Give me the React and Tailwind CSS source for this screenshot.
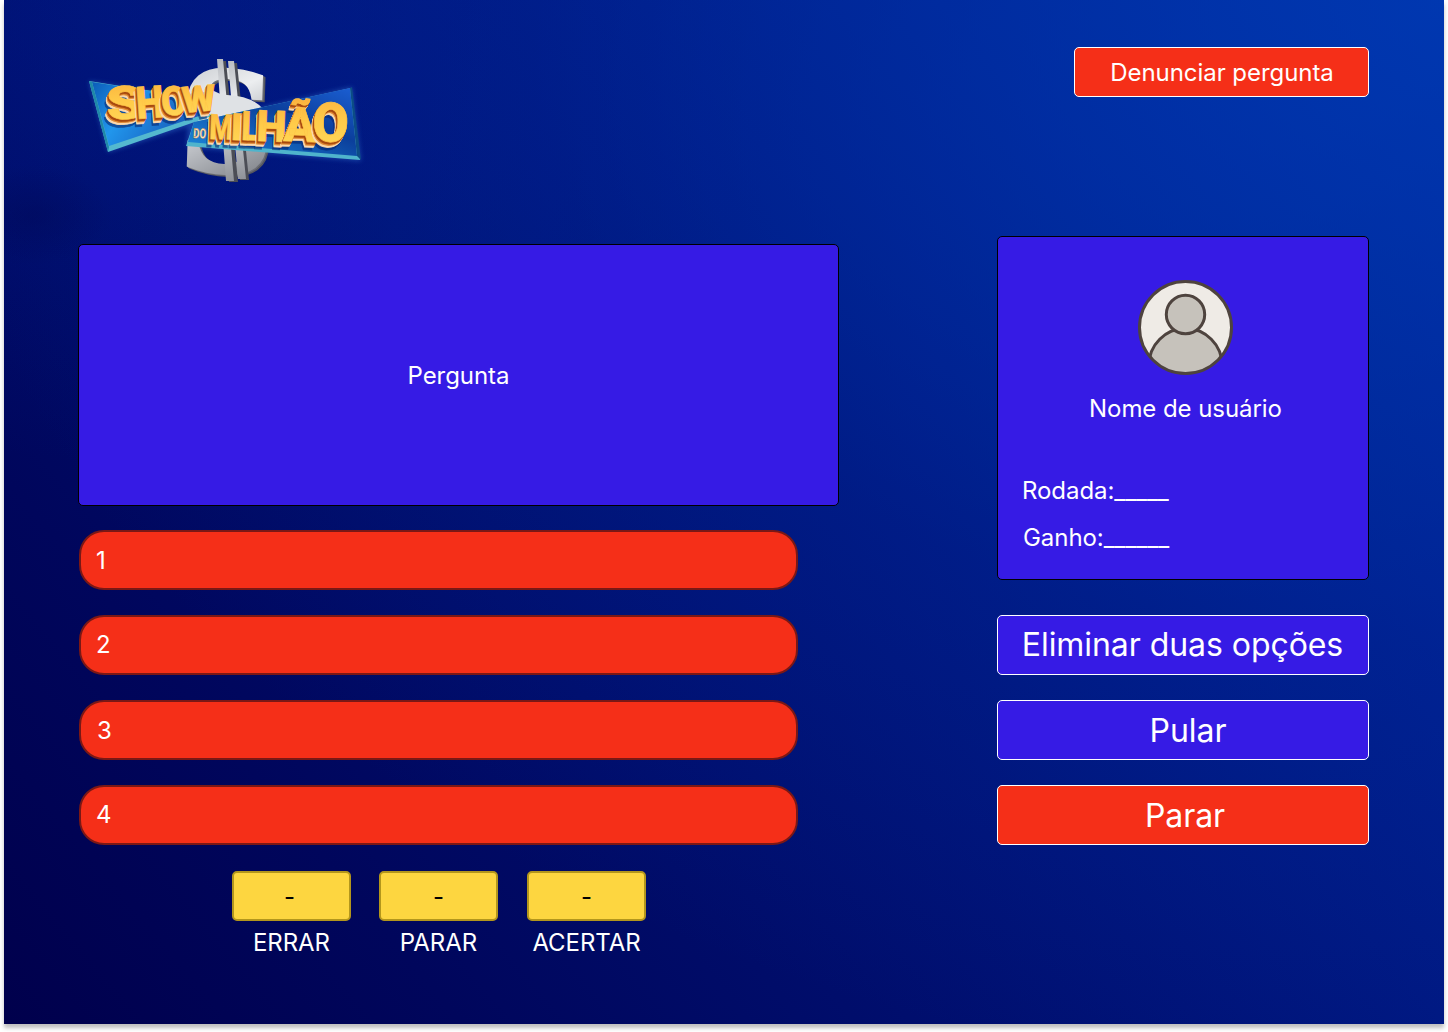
import React from "react";

const BACKDROP =
  "bg-[radial-gradient(ellipse_80px_50px_at_2%_21%,rgba(0,4,70,0.28)_0%,transparent_100%),radial-gradient(ellipse_at_100%_0%,rgba(0,62,185,0.7)_0%,rgba(0,50,170,0.22)_45%,transparent_75%),radial-gradient(ellipse_50%_45%_at_8%_0%,rgba(0,28,140,0.42)_0%,transparent_100%),linear-gradient(50deg,#00004c_0%,#00065c_20%,#001378_52%,#001f8e_78%,#00289c_100%)]";

const SHOW = [
  { ch: "S", x: 107, y: 120, w: 37, h: 33, r: -3 },
  { ch: "H", x: 137, y: 119, w: 28, h: 32, r: -4 },
  { ch: "O", x: 162, y: 116, w: 26, h: 29, r: -4 },
  { ch: "W", x: 183, y: 113, w: 34, h: 26, r: -5 },
];

const MILHAO = [
  { ch: "M", x: 209, y: 139, w: 24, h: 25, r: 2 },
  { ch: "I", x: 230, y: 140, w: 13, h: 27, r: 2 },
  { ch: "L", x: 241, y: 140, w: 18, h: 29, r: 2 },
  { ch: "H", x: 256, y: 141, w: 30, h: 31, r: 2 },
  { ch: "Ã", x: 283, y: 141, w: 33, h: 34, r: 2 },
  { ch: "O", x: 312, y: 141, w: 36, h: 39, r: 2 },
];

const EXTRUSION = [8, 7, 6, 5, 4, 3, 2, 1];

function Glyph({ g, dx = 0, dy = 0, fill, stroke }) {
  const size = 40;
  return (
    <text
      transform={`translate(${g.x + dx} ${g.y + dy}) rotate(${g.r}) scale(1 ${g.h / (size * 0.711)})`}
      textLength={g.w}
      lengthAdjust="spacingAndGlyphs"
      fontFamily="Roboto, sans-serif"
      fontWeight="900"
      fontSize={size}
      fill={fill}
      stroke={stroke || fill}
      strokeWidth="0.5"
    >
      {g.ch}
    </text>
  );
}

function GoldWord({ letters }) {
  return (
    <g>
      {letters.map((g) => (
        <g key={g.ch + g.x} opacity="0.6">
          <Glyph g={g} dx={-4} dy={8} fill="#06256f" />
        </g>
      ))}
      {letters.map((g) => (
        <g key={g.ch + g.x}>
          {EXTRUSION.map((d) => (
            <Glyph key={d} g={g} dx={d * -0.35} dy={d * 0.65} fill={d > 5 ? "#fbd9ae" : d > 3 ? "#e08a35" : "#a84a10"} />
          ))}
          <Glyph g={g} fill="url(#gold)" stroke="#ffc548" />
        </g>
      ))}
    </g>
  );
}

function Dollar({ dx = 0, dy = 0, fill }) {
  return (
    <g transform={`translate(${dx} ${dy})`} fill={fill} stroke={fill}>
      <text
        transform="translate(178 170) rotate(2)"
        fontFamily="'DejaVu Serif', serif"
        fontWeight="700"
        fontSize="138"
        textLength="94"
        lengthAdjust="spacingAndGlyphs"
        strokeWidth="3"
      >
        S
      </text>
    </g>
  );
}

function Logo() {
  return (
    <svg className="block h-[140px] w-[290px] overflow-visible" viewBox="80 50 290 140" aria-label="Show do Milhão">
      <defs>
        <linearGradient id="gold" x1="0" y1="0" x2="0" y2="1">
          <stop offset="0" stopColor="#fab03e" />
          <stop offset="0.45" stopColor="#ffca48" />
          <stop offset="1" stopColor="#ffdb5c" />
        </linearGradient>
        <linearGradient id="steel" gradientUnits="userSpaceOnUse" x1="0" y1="-105" x2="60" y2="10">
          <stop offset="0" stopColor="#c9ccd0" />
          <stop offset="0.35" stopColor="#eceef0" />
          <stop offset="0.6" stopColor="#c0c3c8" />
          <stop offset="1" stopColor="#85888e" />
        </linearGradient>
        <linearGradient id="bars" gradientUnits="userSpaceOnUse" x1="220" y1="60" x2="240" y2="182">
          <stop offset="0" stopColor="#b9bcc1" />
          <stop offset="0.35" stopColor="#eceef0" />
          <stop offset="1" stopColor="#8d9096" />
        </linearGradient>
        <linearGradient id="boardLeft" x1="0" y1="0" x2="1" y2="0.4">
          <stop offset="0" stopColor="#0b5cb8" />
          <stop offset="0.4" stopColor="#2196ec" />
          <stop offset="1" stopColor="#1556b5" />
        </linearGradient>
        <linearGradient id="boardRight" x1="0" y1="1" x2="1" y2="0">
          <stop offset="0" stopColor="#1c8fe0" />
          <stop offset="0.6" stopColor="#0b3f9c" />
          <stop offset="1" stopColor="#1b5fd4" />
        </linearGradient>
        <filter id="glow" x="-20%" y="-20%" width="140%" height="140%">
          <feGaussianBlur stdDeviation="2.5" />
        </filter>
      </defs>
      <path d="M89 81L217 103 202 122 108 152zM188 124L352 87 361 161 187 147z" fill="#2d69c9" opacity="0.55" filter="url(#glow)" />
      <Dollar dx={2.5} dy={2} fill="#55575f" />
      <Dollar dx={1.2} dy={1} fill="#6c6e75" />
      <Dollar fill="url(#steel)" />
      <path d="M220 61l6 0 12 121-9 0z M231 63l6 0 12 117-9 0z" fill="#4c4e56" />
      <path d="M217 59l6 0 11 122-8 0z M228 61l6 0 12 118-8 0z" fill="url(#bars)" />
      <path d="M206 82Q212 94 227 95Q252 96 263 109L240 122 204 120z" fill="#dfe2e5" />
      <path d="M89 81L190 97 212 116 108 152z" fill="#54b8cf" />
      <path d="M92 82L190 97 208 113 109 146z" fill="url(#boardLeft)" />
      <path d="M89 81L92 82 109 147 108 152z" fill="#1f88a8" />
      <path d="M194 122L351 88 360 160 186 146z" fill="#4fb4cc" />
      <path d="M194 122L350 88 357 156 188 142z" fill="url(#boardRight)" />
      <path d="M350 88L352 87 361 160 357 156z" fill="#0c4c86" />
      <GoldWord letters={SHOW} />
      <text
        transform="translate(193 138) rotate(3)"
        fontFamily="Roboto, sans-serif"
        fontWeight="900"
        fontSize="14"
        textLength="13"
        lengthAdjust="spacingAndGlyphs"
        fill="#fbe3b8"
        stroke="#8a4a1a"
        strokeWidth="0.3"
      >
        DO
      </text>
      <GoldWord letters={MILHAO} />
    </svg>
  );
}

function Avatar() {
  return (
    <svg className="block size-24" viewBox="0 0 96 96" aria-hidden="true">
      <defs>
        <clipPath id="face">
          <circle cx="48.5" cy="47.5" r="46" />
        </clipPath>
      </defs>
      <circle cx="48.5" cy="47.5" r="46" fill="#efebe6" />
      <g clipPath="url(#face)" fill="#c6c2bb" stroke="#4e433e" strokeWidth="3">
        <circle cx="48.5" cy="85" r="36.5" />
        <circle cx="48.5" cy="34.5" r="19.2" />
      </g>
      <circle cx="48.5" cy="47.5" r="46" fill="none" stroke="#4e433e" strokeWidth="3" />
    </svg>
  );
}

function SideButton({ color, shift, children }) {
  return (
    <button className={`flex h-[60px] w-full items-center justify-center rounded-[5px] border border-white text-[32px] ${color}`}>
      <span className={shift}>{children}</span>
    </button>
  );
}

function Score({ label, shift }) {
  return (
    <div className="flex w-[119px] flex-col items-center">
      <div className={`flex h-[50px] w-full items-center justify-center rounded-[5px] border-2 border-[#b3961c] bg-[#fdd640] text-black ${shift}`}>-</div>
      <span className="mt-[7px] leading-[29px]">{label}</span>
    </div>
  );
}

const OPTIONS = [
  { n: 1, pad: "pl-[15px]" },
  { n: 2, pad: "pl-[15px] pb-px" },
  { n: 3, pad: "pl-4" },
  { n: 4, pad: "pl-[15px] pb-px" },
];

export default function App() {
  return (
    <div className="h-[1032px] w-[1448px] overflow-hidden bg-white px-1">
      <main
        className={`flex h-[1024px] flex-col px-[75px] font-['Inter',sans-serif] text-2xl leading-[29px] font-normal tracking-[-0.06px] text-white shadow-[0_4px_4px_rgba(0,0,0,0.25)] ${BACKDROP}`}
      >
        <header className="flex h-[236px] items-start justify-between pt-[47px]">
          <div className="pt-[3px] pl-px">
            <Logo />
          </div>
          <button className="flex h-[50px] w-[295px] items-center justify-center rounded-[5px] border border-white bg-[#f52f18] pl-px">
            Denunciar pergunta
          </button>
        </header>

        <div className="flex justify-between">
          <section className="-ml-px w-[761px] pt-2">
            <div className="flex h-[262px] items-center justify-center rounded-[5px] border border-black bg-[#361be5]">Pergunta</div>
            <ol className="mt-6 ml-px flex w-[719px] flex-col gap-[25px]">
              {OPTIONS.map(({ n, pad }) => (
                <li key={n} className={`flex h-[60px] items-center rounded-[25px] border-2 border-[#7a1815] bg-[#f52f18] ${pad}`}>
                  {n}
                </li>
              ))}
            </ol>
            <div className="mt-[26px] ml-[154px] flex">
              <Score label="ERRAR" shift="pr-1" />
              <div className="w-7" />
              <Score label="PARAR" shift="" />
              <div className="w-[29px]" />
              <Score label="ACERTAR" shift="" />
            </div>
          </section>

          <aside className="w-[372px]">
            <div className="h-[344px] rounded-[5px] border border-black bg-[#361be5] pt-[43px]">
              <div className="flex flex-col items-center pl-1">
                <Avatar />
                <p className="mt-[18px] pl-px">Nome de usuário</p>
              </div>
              <p className="mt-[53px] pl-6">Rodada:_____</p>
              <p className="mt-[18px] pl-[25px]">Ganho:______</p>
            </div>
            <div className="mt-[35px] flex flex-col gap-[25px]">
              <SideButton color="bg-[#361be5]" shift="pr-px pb-0.5">Eliminar duas opções</SideButton>
              <SideButton color="bg-[#361be5]" shift="pl-2.5">Pular</SideButton>
              <SideButton color="bg-[#f52f18]" shift="pl-1">Parar</SideButton>
            </div>
          </aside>
        </div>
      </main>
    </div>
  );
}
